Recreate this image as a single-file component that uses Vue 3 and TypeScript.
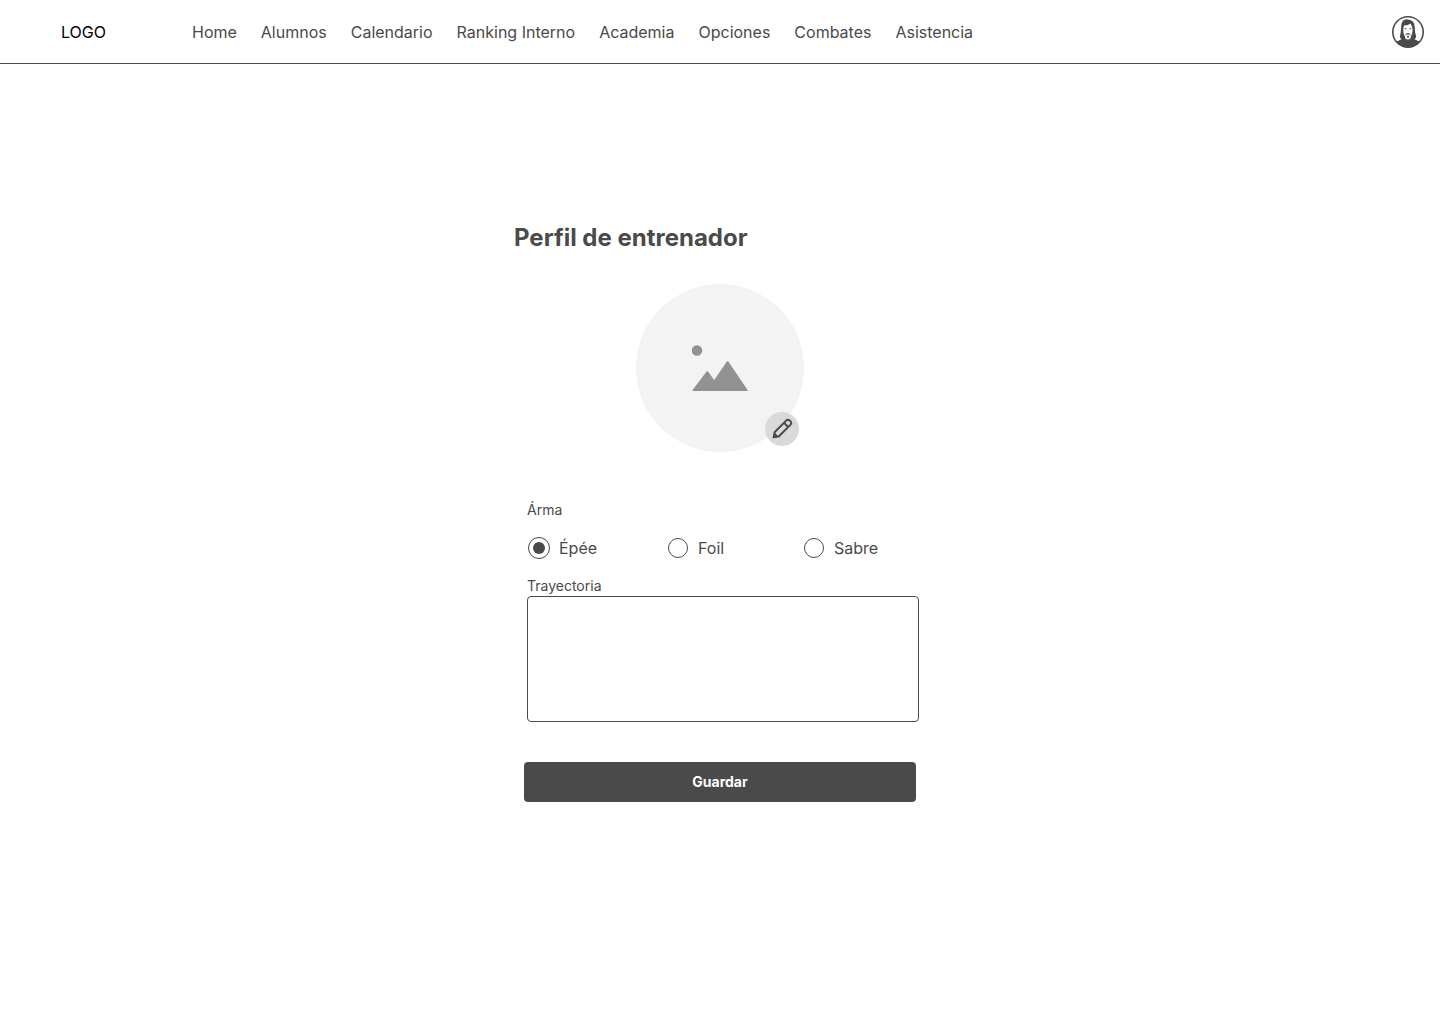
<script setup lang="ts">
import { ref } from 'vue'

interface Option {
  value: string
  label: string
}

const links: string[] = [
  'Home',
  'Alumnos',
  'Calendario',
  'Ranking Interno',
  'Academia',
  'Opciones',
  'Combates',
  'Asistencia',
]

const weapons: Option[] = [
  { value: 'epee', label: 'Épée' },
  { value: 'foil', label: 'Foil' },
  { value: 'sabre', label: 'Sabre' },
]

const weapon = ref<string>('epee')
const career = ref<string>('')
</script>

<template>
  <header class="topbar">
    <a class="logo" href="#">LOGO</a>
    <nav class="nav">
      <a v-for="link in links" :key="link" class="nav-link" href="#">{{ link }}</a>
    </nav>
    <button class="account" type="button" aria-label="Cuenta">
      <svg viewBox="0 0 32 32" width="32" height="32" aria-hidden="true">
        <circle cx="16" cy="16" r="15.2" fill="#fff" stroke="#4a4a4a" stroke-width="1.6" />
        <path
          fill="#4a4a4a"
          d="M15.500 3.400C11.500 3 9.400 6 9.200 10c-.2 4-.3 7-1.200 9.500-.3 1.400.2 2.700 1.500 3.800L4.800 25.600C7.500 29.200 11.500 31.200 16 31.200s8.500-2 11.200-5.600l-4.700-2.300c1.300-1.100 1.800-2.400 1.500-3.800-1-2.500-1.100-6-1.400-9.500C22.200 5.500 19.500 3.600 15.500 3.400z"
        />
        <path
          fill="#fff"
          d="M11.300 12.500c.2-1.500.7-2.500 1.400-3.200 2.300 0 4.300-.6 5.500-1.900 1.100 1.300 2 3 2.300 5.100.2 3.200-.3 6-1.700 8l-.2 1.800c-.8.8-1.600 1.200-2.700 1.200s-1.900-.4-2.700-1.200l-.2-1.800c-1.400-2-1.900-4.800-1.700-8z"
        />
        <path
          fill="#4a4a4a"
          d="M12.600 12.300h1.800v1h-1.800zM17.500 12.300h1.800v1h-1.800zM13.300 19.300c.3-1.500 1.300-2.200 2.700-2.200s2.400.7 2.700 2.200l-1.200-.8h-3zM15 19.700h2l-.3 2h-1.400z"
        />
      </svg>
    </button>
  </header>

  <main class="page">
    <form class="profile" @submit.prevent>
      <h1 class="title">Perfil de entrenador</h1>

      <div class="photo">
        <svg viewBox="0 0 56 48" width="56" height="48" aria-hidden="true">
          <circle cx="5" cy="6.500" r="5.200" fill="#929292" />
          <path
            fill="#929292"
            d="M.6 46 14.600 27.600q.7-.9 1.400 0L22.200 36 34.900 17.500q.7-1 1.400 0L55.600 46q.4 1-.6 1H1q-1 0-.4-1z"
          />
        </svg>
        <button class="edit" type="button" aria-label="Editar foto">
          <svg viewBox="0 0 24 24" width="24" height="24" aria-hidden="true">
            <g fill="none" stroke="#4a4a4a" stroke-width="2" stroke-linejoin="round">
              <path d="M3.800 20.200 4.800 15 16.400 3.400q1.600-1.300 3.200 0l1 1q1.300 1.600 0 3.200L9 19.200z" />
              <path d="M14 5.800l4.200 4.200" />
            </g>
            <path fill="#4a4a4a" d="M4 15 9 20 3.200 21.200q-.8 0-.6-.8z" />
          </svg>
        </button>
      </div>

      <div class="fields">
        <fieldset class="weapons">
          <legend class="caption">Árma</legend>
          <div class="options">
            <label v-for="item in weapons" :key="item.value" class="option">
              <input v-model="weapon" class="radio" type="radio" name="weapon" :value="item.value" />
              {{ item.label }}
            </label>
          </div>
        </fieldset>

        <label class="caption" for="career">Trayectoria</label>
        <textarea id="career" v-model="career" class="career"></textarea>
      </div>

      <button class="save" type="submit">Guardar</button>
    </form>
  </main>
</template>

<style>
body {
  margin: 0;
  background: #fff;
}
</style>

<style scoped>
.topbar,
.page {
  box-sizing: border-box;
  font-family: Inter, 'Liberation Sans', sans-serif;
  font-size: 16px;
  line-height: 20px;
  color: #4a4a4a;
}

.topbar {
  display: flex;
  align-items: center;
  height: 64px;
  padding: 0 16px 0 61px;
  border-bottom: 1px solid #4a4a4a;
}

.logo {
  width: 131px;
  color: #000;
  text-decoration: none;
}

.nav {
  display: flex;
  gap: 24px;
}

.nav-link {
  color: inherit;
  text-decoration: none;
  white-space: nowrap;
}

.account {
  display: flex;
  margin-left: auto;
  padding: 0;
  border: 0;
  border-radius: 50%;
  background: none;
  cursor: pointer;
}

.page {
  display: flex;
  justify-content: center;
  padding: 158px 16px 32px;
}

.profile {
  display: flex;
  flex-direction: column;
  box-sizing: border-box;
  width: 100%;
  max-width: 412px;
}

.title {
  margin: 0 0 30px;
  font-size: 24px;
  font-weight: 700;
  line-height: 32px;
}

.photo {
  position: relative;
  display: flex;
  align-items: center;
  justify-content: center;
  align-self: center;
  width: 168px;
  height: 168px;
  margin-bottom: 48px;
  border-radius: 50%;
  background: #f3f3f3;
}

.edit {
  position: absolute;
  right: 5px;
  bottom: 6px;
  display: flex;
  align-items: center;
  justify-content: center;
  width: 34px;
  height: 34px;
  padding: 0;
  border: 0;
  border-radius: 50%;
  background: #d9d9d9;
  cursor: pointer;
}

.fields {
  display: flex;
  flex-direction: column;
  margin: 0 7px 40px 13px;
}

.weapons {
  min-width: 0;
  margin: 0 0 18px;
  padding: 0;
  border: 0;
}

.caption {
  padding: 0;
  font-size: 14px;
  line-height: 20px;
}

.options {
  display: grid;
  grid-template-columns: 139px 136px auto;
  padding: 18px 0 0 2px;
}

.option {
  display: flex;
  align-items: center;
  gap: 10px;
  height: 20px;
  cursor: pointer;
}

.radio {
  display: grid;
  place-items: center;
  box-sizing: border-box;
  width: 20px;
  height: 20px;
  margin: 0;
  border: 1px solid #4a4a4a;
  border-radius: 50%;
  background: #fff;
  appearance: none;
}

.radio:checked {
  width: 22px;
  height: 22px;
  margin: -1px;
}

.radio:checked::before {
  content: '';
  width: 12px;
  height: 12px;
  border-radius: 50%;
  background: #4a4a4a;
}

.career {
  box-sizing: border-box;
  width: 100%;
  height: 126px;
  padding: 8px;
  border: 1px solid #4a4a4a;
  border-radius: 4px;
  background: #fff;
  color: inherit;
  font: inherit;
  resize: none;
}

.save {
  height: 40px;
  margin: 0 10px;
  padding: 0;
  border: 0;
  border-radius: 4px;
  background: #4a4a4a;
  color: #fff;
  font-family: inherit;
  font-size: 14px;
  font-weight: 700;
  line-height: 20px;
  cursor: pointer;
}
</style>
